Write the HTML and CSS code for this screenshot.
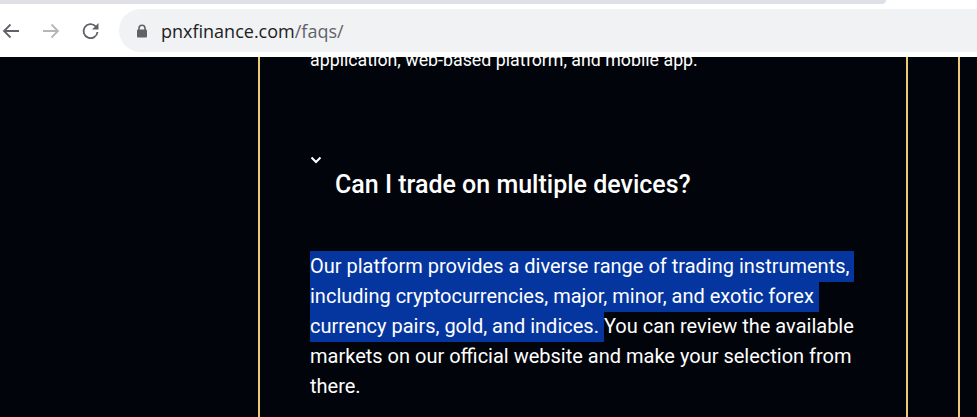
FILE: index.html
```html
<!DOCTYPE html>
<html lang="en">
<head>
<meta charset="utf-8">
<title>FAQs</title>
<link rel="stylesheet" href="styles.css">
</head>
<body>
<header class="browser">
  <div class="tabstrip"><div class="tab-shade"></div></div>
  <div class="toolbar">
    <svg class="nav back" viewBox="0 0 20 20"><path d="M18 10H3M9.500 3.500 3 10l6.500 6.500"/></svg>
    <svg class="nav forward" viewBox="0 0 20 20"><path d="M2 10h15M10.500 3.500 17 10l-6.500 6.500"/></svg>
    <svg class="nav reload" viewBox="0 0 20 20"><path d="M16.500 11a7 7 0 1 1-1.800-5.600"/><path class="fill" d="M17.500 2v6.500H11z"/></svg>
    <div class="omnibox">
      <svg class="lock" viewBox="0 0 12 14"><path d="M3 6V4.200a3 3 0 0 1 6 0V6" class="shackle"/><rect x="1" y="5.500" width="10" height="8" rx="1"/></svg>
      <span class="url">pnxfinance.com<span class="path">/faqs/</span></span>
    </div>
  </div>
</header>
<main class="page">
  <article class="article">
    <p class="cut">application, web-based platform, and mobile app.</p>
    <svg class="chevron" viewBox="0 0 12 8"><path d="M1.500 1.500 6 6l4.500-4.500"/></svg>
    <h2 class="question">Can I trade on multiple devices?</h2>
    <p class="answer"><span class="selected">Our platform provides a diverse range of trading instruments, including cryptocurrencies, major, minor, and exotic forex currency pairs, gold, and indices. </span>You can review the available markets on our official website and make your selection from there.</p>
  </article>
</main>
</body>
</html>
```
FILE: styles.css
```css
* { box-sizing: border-box; }
html, body { margin: 0; height: 100%; overflow: hidden; }
body { width: 977px; height: 417px; display: flex; flex-direction: column; background: #01040a; font-family: Roboto, sans-serif; }

.browser { background: #fff; height: 57px; flex: none; }
.tabstrip { height: 9px; }
.tab-shade { width: 886px; height: 4px; background: #dfdfe7; border-bottom-right-radius: 8px; }
.toolbar { height: 43px; display: flex; align-items: center; }
.nav { width: 20px; height: 20px; flex: none; fill: none; stroke: #5f6368; stroke-width: 1.800; }
.back { margin-left: 1px; }
.forward { margin-left: 20px; stroke: #b4b6ba; }
.reload { margin-left: 20px; }
.reload .fill { fill: #5f6368; stroke: none; }
.omnibox { flex: 1; height: 43px; margin-left: 18px; background: #f1f2f4; border-radius: 22px 0 0 22px; display: flex; align-items: center; padding-left: 17px; }
.lock { width: 12px; height: 14px; fill: #5f6368; }
.shackle { fill: none; stroke: #5f6368; stroke-width: 1.600; }
.url { margin-left: 13px; font-family: "Open Sans", sans-serif; font-size: 18px; color: #202124; white-space: nowrap; }
.path { color: #5f6368; }

.page { flex: 1; width: 960px; min-height: 0; overflow: hidden; padding-left: 258px; border-right: 2px solid #eecb78; }
.article { width: 650px; height: 100%; border: solid #eecb78; border-width: 0 2px; padding-left: 50px; color: #fff; overflow: hidden; }
.cut { margin: -12px 0 0; font-size: 17.8px; line-height: 30px; white-space: nowrap; }
.chevron { display: block; width: 12px; height: 8px; margin: 81px 0 0 0; fill: none; stroke: #fff; stroke-width: 2; }
.question { margin: 6px 0 0 25px; font-size: 25px; line-height: 30px; font-weight: 500; }
.answer { width: 548px; margin: 51px 0 0; font-size: 20px; line-height: 30px; white-space: pre-wrap; }
.selected { background: #0536a0; padding: 3px 0 4px; }
```
